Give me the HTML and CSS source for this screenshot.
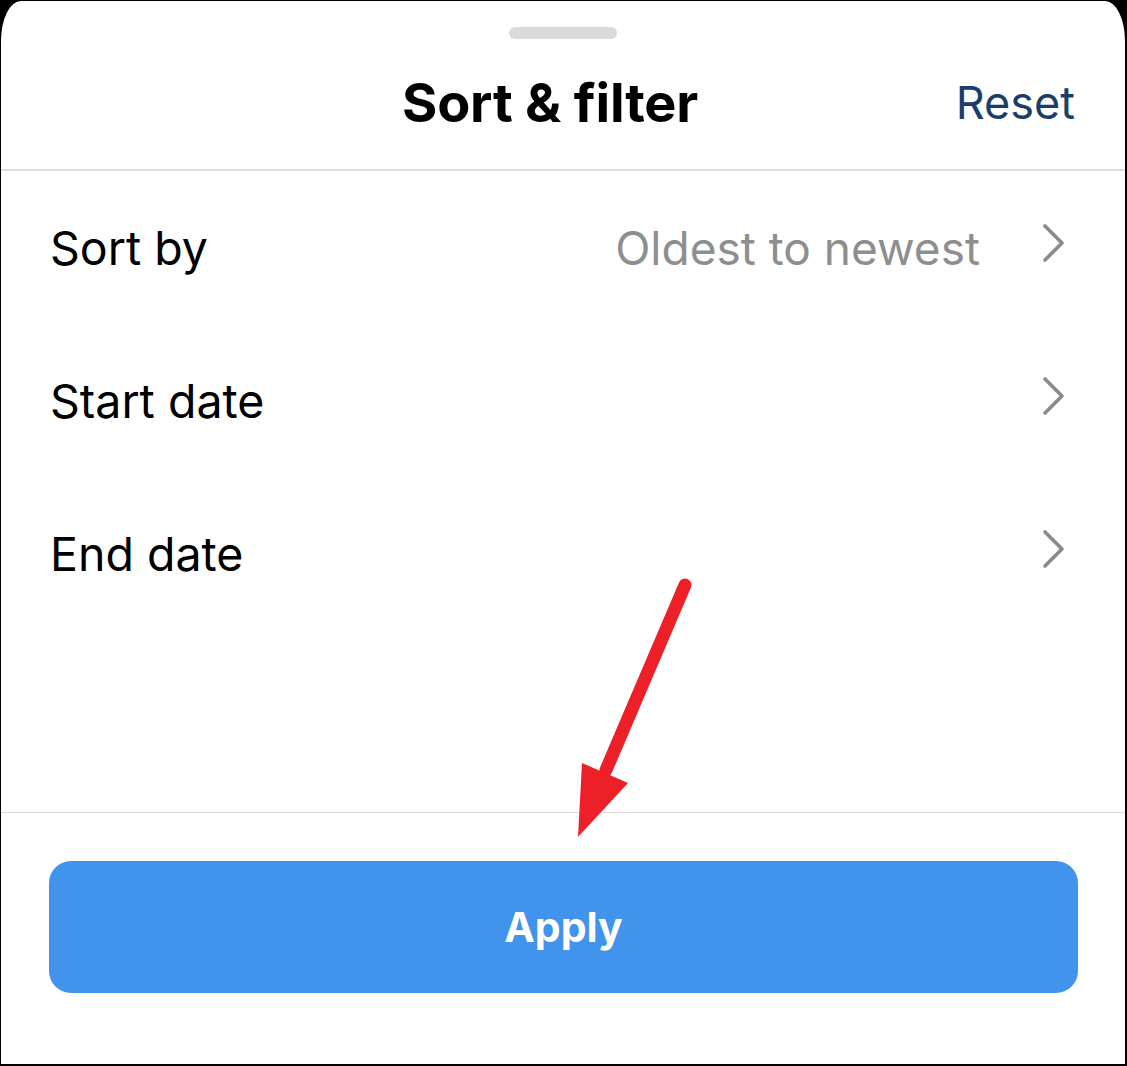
FILE: index.html
```html
<!DOCTYPE html>
<html lang="en">
<head>
<meta charset="utf-8">
<title>Sort &amp; filter</title>
<link rel="stylesheet" href="styles.css">
</head>
<body>
<div class="sheet">
  <div class="handle"></div>
  <header class="header">
    <span></span>
    <h1 class="title">Sort &amp; filter</h1>
    <button class="reset">Reset</button>
  </header>
  <div class="list">
    <div class="row">
      <span class="label">Sort by</span>
      <span class="value">Oldest to newest</span>
      <svg class="chev" width="24" height="40" viewBox="0 0 24 40"><path d="M3 3 L20 20 L3 37" fill="none" stroke="#8a8a8a" stroke-width="3.6" stroke-linecap="round" stroke-linejoin="round"/></svg>
    </div>
    <div class="row">
      <span class="label">Start date</span>
      <span class="value"></span>
      <svg class="chev" width="24" height="40" viewBox="0 0 24 40"><path d="M3 3 L20 20 L3 37" fill="none" stroke="#8a8a8a" stroke-width="3.6" stroke-linecap="round" stroke-linejoin="round"/></svg>
    </div>
    <div class="row">
      <span class="label">End date</span>
      <span class="value"></span>
      <svg class="chev" width="24" height="40" viewBox="0 0 24 40"><path d="M3 3 L20 20 L3 37" fill="none" stroke="#8a8a8a" stroke-width="3.6" stroke-linecap="round" stroke-linejoin="round"/></svg>
    </div>
  </div>
  <div class="footer">
    <button class="apply">Apply</button>
  </div>
  <svg class="arrow" width="1127" height="1066" viewBox="0 0 1127 1066">
    <line x1="685" y1="585" x2="606" y2="770" stroke="#ed1f27" stroke-width="13" stroke-linecap="round"/>
    <polygon points="582,763 628,783 578,837" fill="#ed1f27"/>
  </svg>
</div>
</body>
</html>
```

FILE: styles.css
```css
* { box-sizing: border-box; }
html, body { margin: 0; padding: 0; }
body {
  background: #000;
  width: 1127px;
  height: 1066px;
  overflow: hidden;
  font-family: Inter, "Liberation Sans", Arial, sans-serif;
}
.sheet {
  position: relative;
  margin: 1px 2px 0 1px;
  height: 1063px;
  background: #fff;
  border-radius: 20px 20px 0 0 / 40px 40px 0 0;
  display: flex;
  flex-direction: column;
}
.handle {
  width: 108px;
  height: 12px;
  border-radius: 6px;
  background: #dadada;
  margin: 26px 0 0 508px;
}
.header {
  display: grid;
  grid-template-columns: 1fr auto 1fr;
  align-items: center;
  height: 132px;
  padding: 0 50px 0 24px;
  border-bottom: 2px solid #dcdcdc;
}
.title {
  margin: 0;
  font-size: 54px;
  font-weight: 700;
  color: #000;
  letter-spacing: -0.2px;
  padding-bottom: 3px;
}
.reset {
  justify-self: end;
  background: none;
  border: 0;
  padding: 0;
  font-family: inherit;
  font-size: 45px;
  color: #1b3d6c;
  padding-bottom: 3px;
}
.list {
  flex: 1;
  border-bottom: 1px solid #dcdcdc;
}
.row {
  display: flex;
  align-items: center;
  height: 153px;
  padding: 0 59px 0 49px;
}
.label {
  font-size: 46.5px;
  color: #000;
  flex: 1;
  padding-top: 1px;
}
.value {
  font-size: 46px;
  color: #8e8e8e;
  margin-right: 62px;
  padding-top: 1px;
}
.chev { margin-bottom: 10px; }
.footer {
  height: 251px;
  padding: 48px 47px 0 48px;
}
.apply {
  width: 100%;
  height: 132px;
  border: 0;
  border-radius: 22px;
  background: #4293ec;
  color: #fff;
  font-family: inherit;
  font-size: 41px;
  font-weight: 700;
}
.arrow {
  position: absolute;
  left: -1px;
  top: -1px;
  pointer-events: none;
}
```
